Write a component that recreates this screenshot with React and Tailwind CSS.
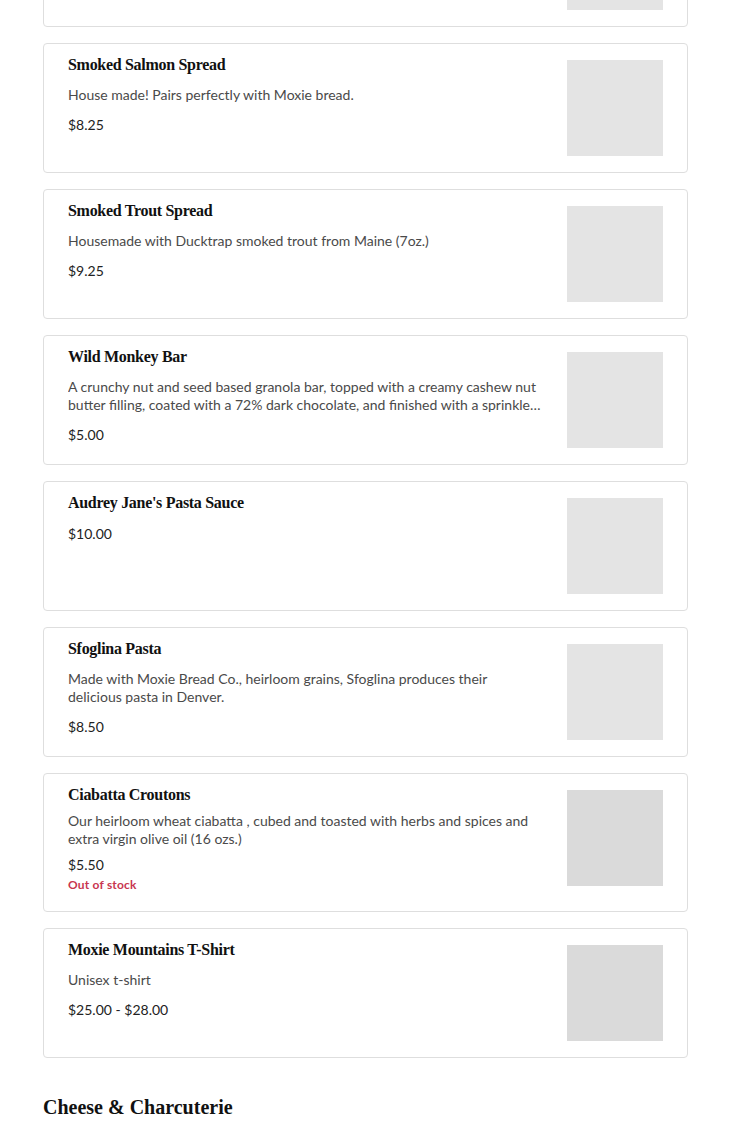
import React from "react";

const items = [
  {
    title: "Local Honey",
    desc: "",
    price: "",
    img: "bg-[#e4e4e4]",
  },
  {
    title: "Smoked Salmon Spread",
    desc: "House made! Pairs perfectly with Moxie bread.",
    price: "$8.25",
    img: "bg-[#e4e4e4]",
  },
  {
    title: "Smoked Trout Spread",
    desc: "Housemade with Ducktrap smoked trout from Maine (7oz.)",
    price: "$9.25",
    img: "bg-[#e4e4e4]",
  },
  {
    title: "Wild Monkey Bar",
    desc: "A crunchy nut and seed based granola bar, topped with a creamy cashew nut butter filling, coated with a 72% dark chocolate, and finished with a sprinkle of sea salt and cacao nibs.",
    price: "$5.00",
    img: "bg-[#e4e4e4]",
    clamp: true,
  },
  {
    title: "Audrey Jane's Pasta Sauce",
    desc: "",
    price: "$10.00",
    img: "bg-[#e4e4e4]",
  },
  {
    title: "Sfoglina Pasta",
    desc: "Made with Moxie Bread Co., heirloom grains, Sfoglina produces their delicious pasta in Denver.",
    price: "$8.50",
    img: "bg-[#e4e4e4]",
  },
  {
    title: "Ciabatta Croutons",
    desc: "Our heirloom wheat ciabatta , cubed and toasted with herbs and spices and extra virgin olive oil (16 ozs.)",
    price: "$5.50",
    img: "bg-[#dadada]",
    oos: true,
  },
  {
    title: "Moxie Mountains T-Shirt",
    desc: "Unisex t-shirt",
    price: "$25.00 - $28.00",
    img: "bg-[#dadada]",
  },
];

const serif = { fontFamily: '"Liberation Serif", "DejaVu Serif", serif' };
const sans = { fontFamily: 'Lato, "Open Sans", sans-serif' };

function Card({ item }) {
  const compact = item.oos;
  return (
    <div className="flex items-start gap-6 rounded-[4px] border border-[#dedede] bg-white pl-6 pr-6 pt-[11px] pb-4">
      <div className="flex min-w-0 flex-1 flex-col">
        <div
          className="text-[16px] font-bold leading-5 tracking-[-0.3px] text-[#111111]"
          style={serif}
        >
          {item.title}
        </div>
        {item.desc ? (
          <div
            className={`${compact ? "mt-[7px]" : "mt-[11px]"} text-[14px] leading-[18px] text-[#4a4a4a] ${item.clamp ? "line-clamp-2" : ""}`}
            style={sans}
          >
            {item.desc}
          </div>
        ) : null}
        {item.price ? (
          <div
            className={`${compact ? "mt-2" : "mt-3"} text-[14px] leading-[18px] text-[#222222]`}
            style={sans}
          >
            {item.price}
          </div>
        ) : null}
        {item.oos ? (
          <div
            className="mt-[1px] text-[12px] font-bold leading-5 tracking-[0.2px] text-[#c8364f]"
            style={sans}
          >
            Out of stock
          </div>
        ) : null}
      </div>
      <div className={`mt-[5px] h-24 w-24 shrink-0 ${item.img}`} />
    </div>
  );
}

export default function App() {
  return (
    <div className="min-h-[1144px] overflow-hidden bg-white">
      <div className="-mt-[103px] flex flex-col gap-4 pl-[43px] pr-[42px]">
        {items.map((it, i) => (
          <Card key={i} item={it} />
        ))}
      </div>
      <h2
        className="mt-[35px] pl-[43px] text-[20px] font-bold leading-7 text-[#111111]"
        style={serif}
      >
        Cheese &amp; Charcuterie
      </h2>
    </div>
  );
}
